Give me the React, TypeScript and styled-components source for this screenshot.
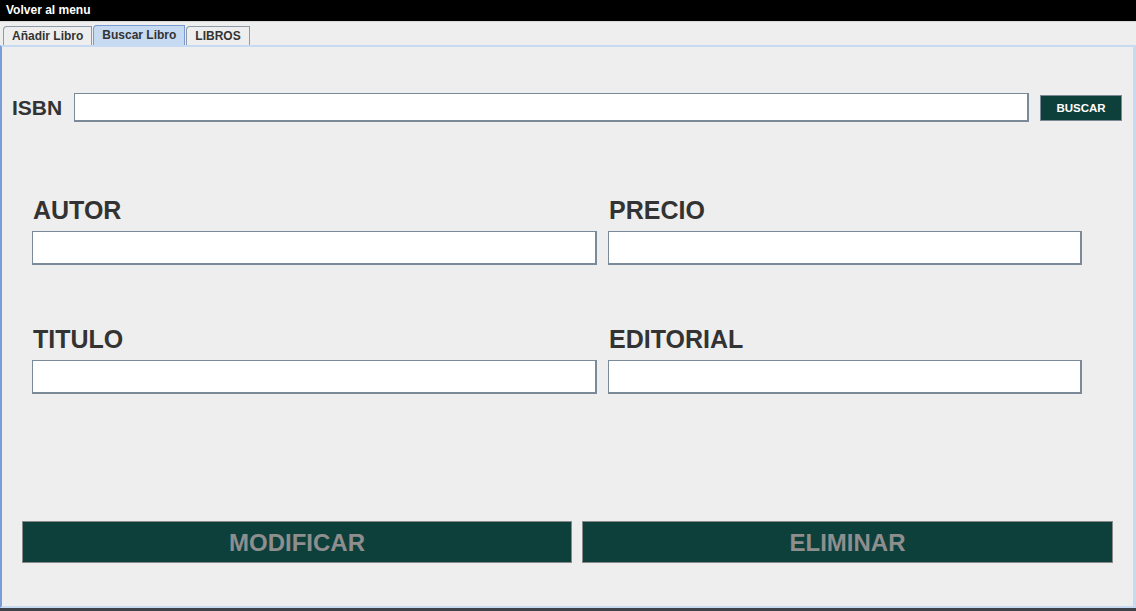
import React from "react";
import styled, { createGlobalStyle } from "styled-components";

const Global = createGlobalStyle`
  html, body { margin: 0; padding: 0; background: #eeeeee; }
  body { font-family: "Liberation Sans", Arial, sans-serif; }
  * { box-sizing: border-box; }
`;

const Frame = styled.div`
  width: 1136px;
  height: 611px;
  display: flex;
  flex-direction: column;
  background: #eeeeee;
  overflow: hidden;
`;

const TopBar = styled.div`
  height: 21px;
  background: #000;
  color: #fff;
  font-weight: bold;
  font-size: 12px;
  line-height: 21px;
  padding-left: 6px;
  flex: none;
`;

const TabStrip = styled.div`
  height: 24px;
  display: flex;
  align-items: flex-end;
  padding-left: 3px;
  border-top: 1px solid #d8d8d8;
  flex: none;
`;

const Tab = styled.div<{ $active?: boolean }>`
  height: ${(p) => (p.$active ? 20 : 19)}px;
  padding: 0 8px;
  margin-right: 1px;
  font-size: 12px;
  font-weight: bold;
  color: #333;
  line-height: 18px;
  background: ${(p) => (p.$active ? "#c6daf1" : "#eeeeee")};
  border: 1px solid ${(p) => (p.$active ? "#7a9bd3" : "#8e9aa8")};
  border-bottom: none;
  border-top-left-radius: 4px 4px;
`;

const Panel = styled.div`
  flex: 1;
  border-top: 2px solid #c6daf1;
  border-left: 2px solid #7b9ed8;
  border-right: 3px solid #c6daf1;
  border-bottom: 2px solid #c6daf1;
  display: flex;
  flex-direction: column;
  padding: 46px 11px 0 10px;
`;

const BottomStrip = styled.div`
  height: 3px;
  background: #3f4248;
  flex: none;
`;

const SearchRow = styled.div`
  display: flex;
  align-items: center;
  height: 29px;
`;

const IsbnLabel = styled.div`
  font-size: 21px;
  font-weight: bold;
  color: #333;
  width: 62px;
`;

const Input = styled.div<{ $w?: number; $h?: number }>`
  background: #fff;
  border: 1px solid #7b8a99;
  border-right-width: 2px;
  border-bottom-width: 2px;
  width: ${(p) => p.$w ?? 100}px;
  height: ${(p) => p.$h ?? 30}px;
`;

const SearchButton = styled.div`
  margin-left: 11px;
  width: 82px;
  height: 26px;
  background: #0e403b;
  border: 1px solid #7a8794;
  color: #fff;
  font-size: 11.5px;
  font-weight: bold;
  display: flex;
  align-items: center;
  justify-content: center;
  padding-top: 1px;
`;

const FieldGrid = styled.div`
  margin-top: 71px;
  margin-left: 20px;
  display: grid;
  grid-template-columns: 565px 474px;
  column-gap: 11px;
  row-gap: 57px;
`;

const Field = styled.div`
  display: flex;
  flex-direction: column;
`;

const FieldLabel = styled.div`
  font-size: 25px;
  font-weight: bold;
  color: #333;
  line-height: 28px;
  height: 31px;
  padding-top: 3px;
  margin-bottom: 7px;
  padding-left: 1px;
`;

const ButtonRow = styled.div`
  margin-top: 127px;
  margin-left: 10px;
  display: grid;
  grid-template-columns: 550px 531px;
  column-gap: 10px;
`;

const ActionButton = styled.div`
  height: 42px;
  background: #0e403b;
  border: 1px solid #8a8a8a;
  color: #8e8e8e;
  font-size: 24px;
  font-weight: bold;
  display: flex;
  align-items: center;
  justify-content: center;
  padding-top: 2px;
`;

export default function App() {
  return (
    <Frame>
      <Global />
      <TopBar>Volver al menu</TopBar>
      <TabStrip>
        <Tab>Añadir Libro</Tab>
        <Tab $active>Buscar Libro</Tab>
        <Tab>LIBROS</Tab>
      </TabStrip>
      <Panel>
        <SearchRow>
          <IsbnLabel>ISBN</IsbnLabel>
          <Input $w={956} $h={29} />
          <SearchButton>BUSCAR</SearchButton>
        </SearchRow>
        <FieldGrid>
          <Field>
            <FieldLabel>AUTOR</FieldLabel>
            <Input $w={565} $h={34} />
          </Field>
          <Field>
            <FieldLabel>PRECIO</FieldLabel>
            <Input $w={474} $h={34} />
          </Field>
          <Field>
            <FieldLabel>TITULO</FieldLabel>
            <Input $w={565} $h={34} />
          </Field>
          <Field>
            <FieldLabel>EDITORIAL</FieldLabel>
            <Input $w={474} $h={34} />
          </Field>
        </FieldGrid>
        <ButtonRow>
          <ActionButton>MODIFICAR</ActionButton>
          <ActionButton>ELIMINAR</ActionButton>
        </ButtonRow>
      </Panel>
      <BottomStrip />
    </Frame>
  );
}
